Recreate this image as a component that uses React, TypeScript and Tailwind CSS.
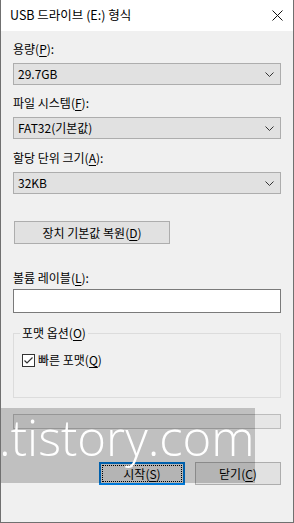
import React from "react";

const font = { fontFamily: '"Noto Sans CJK KR", "Noto Sans", sans-serif' };

function U({ children }: { children: React.ReactNode }) {
  return <span className="underline underline-offset-2 decoration-1">{children}</span>;
}

function Chevron() {
  return (
    <svg width="9" height="5" viewBox="0 0 9 5" className="shrink-0">
      <path d="M0.5 0.5 L4.5 4.5 L8.5 0.5" fill="none" stroke="#333" strokeWidth="1" />
    </svg>
  );
}

function Combo({ value }: { value: string }) {
  return (
    <div className="h-[22px] border border-[#adadad] bg-[#e1e1e1] flex items-center justify-between pl-[4px] pr-[6px] text-[12px] text-black">
      <span>{value}</span>
      <Chevron />
    </div>
  );
}

export default function App() {
  return (
    <div
      className="relative w-[294px] h-[523px] bg-[#f0f0f0] border-l border-r border-b border-[#707070] flex flex-col overflow-hidden text-black"
      style={font}
    >
      {/* title bar */}
      <div className="h-[31px] bg-white flex items-center justify-between pl-[9px] pr-[10px] shrink-0">
        <span className="text-[12.5px]">USB 드라이브 (E:) 형식</span>
        <svg width="11" height="11" viewBox="0 0 11 11">
          <path d="M0.5 0.5 L10.5 10.5 M10.5 0.5 L0.5 10.5" stroke="#111" strokeWidth="1" fill="none" />
        </svg>
      </div>

      <div className="flex flex-col px-[12px] text-[12px] leading-[16px]">
        <div className="mt-[10px]">
          용량(<U>P</U>):
        </div>
        <div className="mt-[6px]">
          <Combo value="29.7GB" />
        </div>

        <div className="mt-[10px]">
          파일 시스템(<U>F</U>):
        </div>
        <div className="mt-[6px]">
          <Combo value="FAT32(기본값)" />
        </div>

        <div className="mt-[11px]">
          할당 단위 크기(<U>A</U>):
        </div>
        <div className="mt-[6px]">
          <Combo value="32KB" />
        </div>

        <button className="mt-[27px] ml-[1px] w-[156px] h-[23px] border border-[#adadad] bg-[#e1e1e1] text-[12px] flex items-center justify-center">
          장치 기본값 복원(<U>D</U>)
        </button>

        <div className="mt-[26px]">
          볼륨 레이블(<U>L</U>):
        </div>
        <div className="mt-[3px] h-[24px] border border-[#7a7a7a] bg-white" />

        {/* format options group */}
        <div className="relative mt-[20px] h-[65px] border border-[#dcdcdc]">
          <div className="absolute -top-[9px] left-[6px] px-[2px] bg-[#f0f0f0]">
            포맷 옵션(<U>O</U>)
          </div>
          <div className="flex items-center gap-[3px] mt-[18px] ml-[8px]">
            <div className="w-[13px] h-[13px] border border-[#333] bg-white flex items-center justify-center">
              <svg width="11" height="11" viewBox="0 0 11 11">
                <path d="M1.5 5.5 L4 8 L9.5 2.5" fill="none" stroke="#333" strokeWidth="1.2" />
              </svg>
            </div>
            <span>
              빠른 포맷(<U>Q</U>)
            </span>
          </div>
        </div>

        {/* progress bar */}
        <div className="mt-[16px] h-[15px] border border-[#bcbcbc] bg-[#e6e6e6]" />

        <div className="mt-[33px] flex justify-end gap-[10px]">
          <button className="w-[86px] h-[23px] border-2 border-[#0078d7] bg-[#e1e1e1] p-[1px]">
            <div className="h-full w-full border border-dotted border-black flex items-center justify-center text-[12px]">
              시작(<U>S</U>)
            </div>
          </button>
          <button className="w-[86px] h-[23px] border border-[#adadad] bg-[#e1e1e1] flex items-center justify-center text-[12px]">
            닫기(<U>C</U>)
          </button>
        </div>
      </div>

      {/* watermark overlay */}
      <div className="absolute left-0 top-[408px] w-[254px] h-[75px] bg-black/20 overflow-hidden">
        <div
          className="absolute -left-[2px] top-[1px] text-[49px] leading-[56px] font-light text-white whitespace-nowrap"
          style={{ fontFamily: '"Open Sans", sans-serif' }}
        >
          .tistory.com
        </div>
      </div>
    </div>
  );
}
